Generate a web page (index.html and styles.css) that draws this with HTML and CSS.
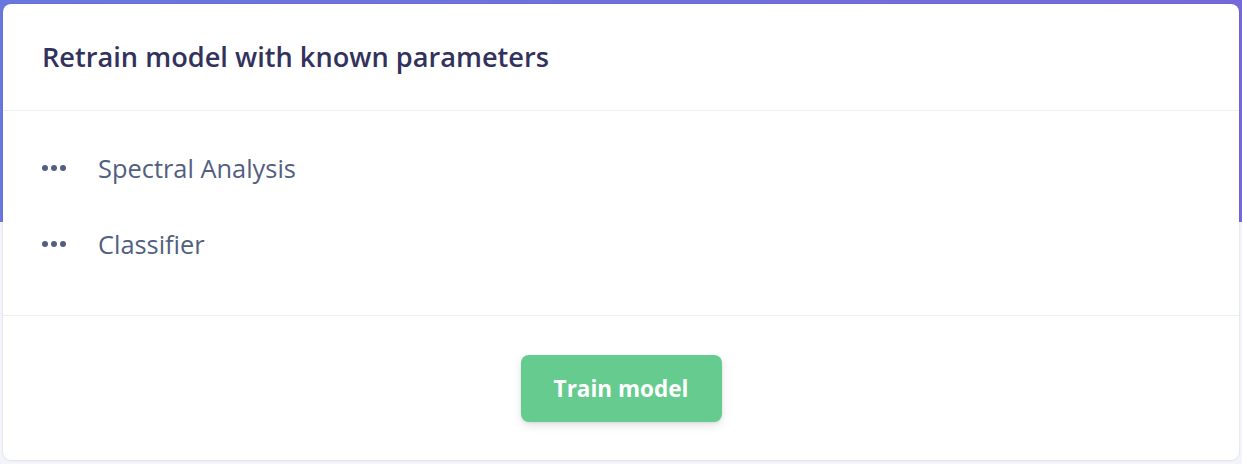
FILE: index.html
```html
<!DOCTYPE html>
<html lang="en">
<head>
<meta charset="utf-8">
<title>Retrain model</title>
<link rel="stylesheet" href="styles.css">
</head>
<body>
  <div class="card">
    <div class="card-header">
      <h3 class="card-title">Retrain model with known parameters</h3>
    </div>
    <div class="card-body">
      <div class="step">
        <svg class="dots" width="24" height="6" viewBox="0 0 24 6"><circle cx="3" cy="3" r="3"/><circle cx="12" cy="3" r="3"/><circle cx="21" cy="3" r="3"/></svg>
        <span class="step-name">Spectral Analysis</span>
      </div>
      <div class="step">
        <svg class="dots" width="24" height="6" viewBox="0 0 24 6"><circle cx="3" cy="3" r="3"/><circle cx="12" cy="3" r="3"/><circle cx="21" cy="3" r="3"/></svg>
        <span class="step-name">Classifier</span>
      </div>
    </div>
    <div class="card-footer">
      <button class="btn-train" type="button">Train model</button>
    </div>
  </div>
</body>
</html>
```
FILE: styles.css
```css
* { box-sizing: border-box; }
html, body { margin: 0; padding: 0; }
body {
  font-family: "Open Sans", "Liberation Sans", sans-serif;
  background-color: #f4f5fa;
  background-image: linear-gradient(87deg, #6a77e0 0%, #7569d9 100%);
  background-size: 100% 222px;
  background-repeat: no-repeat;
  padding: 4px 3px 0 3px;
  height: 464px;
  overflow: hidden;
}
.card {
  background: #ffffff;
  border-radius: 8px;
  height: 456px;
  display: flex;
  flex-direction: column;
  box-shadow: 0 0 0 1px rgba(0, 0, 0, 0.03), 0 1px 3px rgba(50, 50, 93, 0.06);
}
.card-header {
  padding: 35px 39px;
  border-bottom: 1px solid #eeeff3;
}
.card-title {
  margin: 0;
  font-size: 27.2px;
  font-weight: 600;
  line-height: 36px;
  color: #32325d;
}
.card-body {
  padding: 39px 39px 53px;
  display: flex;
  flex-direction: column;
  gap: 40px;
  border-bottom: 1px solid #eeeff3;
}
.step {
  display: flex;
  align-items: center;
  height: 36px;
}
.dots {
  fill: #525f7f;
  margin-right: 32px;
}
.step-name {
  font-size: 25.4px;
  line-height: 36px;
  color: #525f7f;
}
.card-footer {
  flex: 1;
  display: flex;
  justify-content: center;
  padding-top: 39px;
}
.btn-train {
  height: 67px;
  width: 201px;
  padding: 0;
  border: none;
  border-radius: 8px;
  background: #66cb8e;
  color: #ffffff;
  font-family: "Open Sans", "Liberation Sans", sans-serif;
  font-size: 22.5px;
  font-weight: 700;
  box-shadow: 0 4px 8px rgba(50, 50, 93, 0.12), 0 1px 3px rgba(0, 0, 0, 0.08);
}
```
